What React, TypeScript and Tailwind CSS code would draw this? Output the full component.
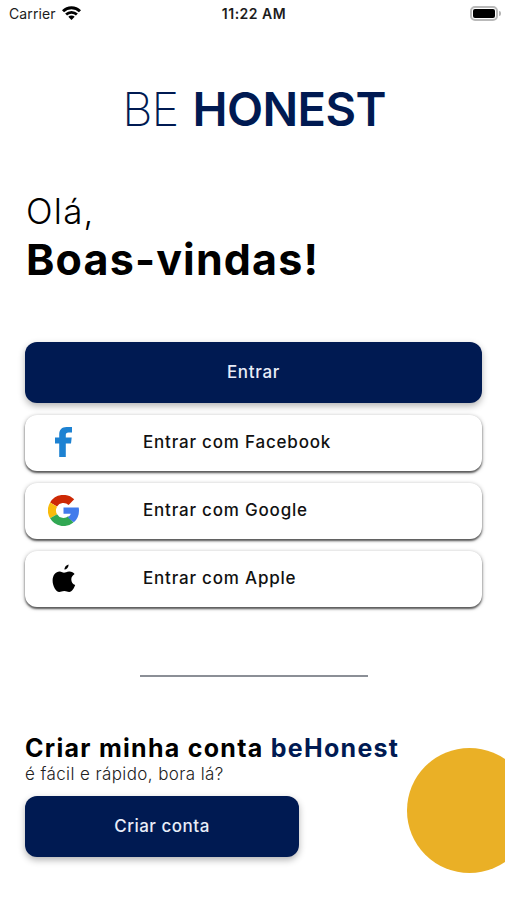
import type { ReactNode } from 'react'

function StatusBar() {
  return (
    <div className="flex h-[27px] items-center justify-between pl-[9px] pr-[6px] font-['Inter',sans-serif] text-[#1c1c1c]">
      <div className="flex w-[120px] items-center gap-[6px]">
        <span className="text-sm leading-none tracking-[0.1px]">Carrier</span>
        <svg className="mb-px h-[14px] w-[19px]" viewBox="0 0 19 14" fill="none">
          <path d="M1 5.3a12 12 0 0 1 17 0" stroke="#000" strokeWidth="3" />
          <path d="M4.1 8.5a7.7 7.7 0 0 1 10.8 0" stroke="#000" strokeWidth="2.7" />
          <path d="M9.5 14 6.3 10.8a4.6 4.6 0 0 1 6.4 0z" fill="#000" />
        </svg>
      </div>
      <span className="pr-[2px] text-sm leading-none font-semibold tracking-[0.5px]">11:22 AM</span>
      <div className="flex w-[120px] items-center justify-end gap-px">
        <div className="mb-px h-[15px] w-[28px] rounded-[5px] border-2 border-[#b9b9b9] p-px">
          <div className="h-full w-full rounded-[2px] bg-black" />
        </div>
        <div className="h-[5px] w-[2px] rounded-r-full bg-[#b4b4b4]" />
      </div>
    </div>
  )
}

function FacebookIcon() {
  return (
    <svg className="h-[30px] w-[17px]" viewBox="0 0 17 30" fill="#1d82d2">
      <path d="M4.2 30V16.4H0v-5.8h4.2V7.4C4.2 2.7 6.9 0 11.5 0H17v5.4h-3.5c-2 0-2.7.9-2.7 2.5v2.7h5.9l-.7 5.8h-5.2V30z" />
    </svg>
  )
}

function GoogleIcon() {
  return (
    <svg className="h-[31px] w-[31px]" viewBox="0 0 40 40" fill="none" strokeWidth="10.4">
      <path d="M7.2 12.3A14.8 14.8 0 0 1 30.2 9.3" stroke="#cd2905" />
      <path d="M7.2 27.4A14.8 14.8 0 0 1 7.2 12.4" stroke="#f9bb0c" />
      <path d="M29.5 31.4A14.8 14.8 0 0 1 7.2 27.4" stroke="#31a853" />
      <path
        fill="#427bec"
        d="M20 16.2h19.6c.3 1.3.4 2.6.4 4 0 6.2-2.4 11.4-6.7 15.1l-7.8-6.4c2-1.3 3.3-2.8 3.9-4.7H20z"
      />
    </svg>
  )
}

function AppleIcon() {
  return (
    <svg className="h-[29px] w-[24px]" viewBox="0 0 24 29" fill="#000">
      <path d="M12 8.7c1.3 0 3-1.4 5.4-1.3 2.3.1 4.1 1.1 5.2 2.7-2.2 1.5-3.3 3.1-3.3 5.4 0 2.6 1.5 4.6 3.9 5.6-1 2.9-3.2 6.7-5.9 6.9-1.8.1-2.6-1-5-1-2.4 0-3.2 1-5 1C3.8 28 .6 21.7.6 16.8c0-5.9 3.2-9.3 7-9.4 1.9 0 3.3 1.3 4.4 1.3z" />
      <path d="M12.3 5.6c.2-2.6 1.8-4.6 4.3-5.2 0 2.7-1.7 4.9-4.3 5.2z" />
    </svg>
  )
}

interface SocialButtonProps {
  icon: ReactNode
  children: ReactNode
}

function SocialButton({ icon, children }: SocialButtonProps) {
  return (
    <button className="flex h-14 w-full items-center rounded-xl bg-white shadow-[0_2px_2px_rgba(0,0,0,0.55),0_1px_4px_rgba(0,0,0,0.35)]">
      <span className="flex w-[77px] justify-center pb-[2px]">{icon}</span>
      <span className="ml-[41px] pb-px text-[17px] font-medium tracking-[0.8px] whitespace-nowrap text-[#111]">
        {children}
      </span>
    </button>
  )
}

export default function App() {
  return (
    <div className="flex h-[900px] w-[507px] flex-col overflow-hidden bg-white font-['Inter',sans-serif] text-black">
      <StatusBar />

      <h1 className="mt-[51px] flex h-[60px] items-center justify-center gap-[14px] pl-px text-[47px] leading-none text-[#001a52]">
        <span className="font-extralight tracking-[-0.8px]">BE</span>
        <span className="font-semibold tracking-[-0.6px]">HONEST</span>
      </h1>

      <div className="mt-[49px] pl-[26px]">
        <p className="h-[47px] text-[35px] leading-[48px] font-light tracking-[1.2px]">Olá,</p>
        <p className="h-[52px] text-[43px] leading-[50px] font-bold tracking-[1.15px] whitespace-nowrap">
          Boas-vindas!
        </p>
      </div>

      <div className="mt-[56px] flex flex-col gap-3 px-[25px]">
        <button className="h-[61px] w-[457px] rounded-xl bg-[#001a52] text-[17px] font-medium tracking-[0.7px] text-[#e8edf8] shadow-[0_3px_7px_rgba(0,0,0,0.3)]">
          Entrar
        </button>
        <SocialButton icon={<FacebookIcon />}>Entrar com Facebook</SocialButton>
        <SocialButton icon={<GoogleIcon />}>Entrar com Google</SocialButton>
        <SocialButton icon={<AppleIcon />}>Entrar com Apple</SocialButton>
      </div>

      <hr className="mt-[68px] ml-[140px] h-[2px] w-[228px] border-0 bg-[#8b8f96]" />

      <div className="mt-[57px] flex justify-between pl-[25px]">
        <div>
          <h2 className="h-[29px] text-[25px] leading-[29px] font-bold tracking-[1.28px] whitespace-nowrap">
            Criar minha conta <span className="text-[#001a52]">beHonest</span>
          </h2>
          <p className="h-[22px] text-[17px] leading-[22px] font-light tracking-[0.4px] whitespace-nowrap text-[#222]">
            é fácil e rápido, bora lá?
          </p>
          <button className="mt-[11px] h-[61px] w-[274px] rounded-xl bg-[#001a52] text-[17px] font-medium tracking-[0.5px] text-[#e8edf8] shadow-[0_3px_7px_rgba(0,0,0,0.3)]">
            Criar conta
          </button>
        </div>
        <div className="mt-[14px] mr-[2px] w-[98px] shrink-0 overflow-hidden">
          <div className="h-[125px] w-[125px] rounded-full bg-[#eab026]" />
        </div>
      </div>
    </div>
  )
}
